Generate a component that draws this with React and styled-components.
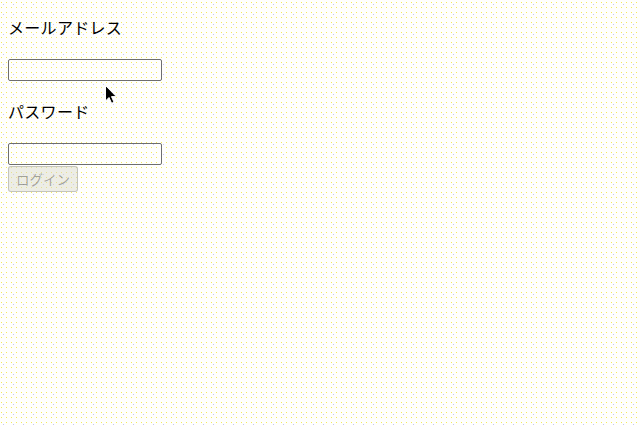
import React from "react";
import styled, { createGlobalStyle } from "styled-components";

const GlobalStyle = createGlobalStyle`
  html, body {
    margin: 0;
    padding: 0;
  }
  body {
    font-family: "Noto Sans CJK JP", "Noto Sans", sans-serif;
    color: #000;
  }
`

const Page = styled.div`
  position: relative;
  min-height: 100vh;
  box-sizing: border-box;
  padding: 16px 8px;
  background-color: #fffffd;
  background-image:
    conic-gradient(at 1px 1px, transparent 75%, #f2ea5c 0),
    conic-gradient(at 1px 1px, transparent 75%, #c9c6f0 0);
  background-size: 5px 5px, 10px 10px;
  background-position: 1px 2px, 3px 4px;
`

const Form = styled.form`
  display: flex;
  flex-direction: column;
  align-items: flex-start;
`

const Field = styled.div`
  display: flex;
  flex-direction: column;
  align-items: flex-start;
  gap: 20px;
  & + & {
    margin-top: 19px;
  }
`

const Label = styled.label`
  display: block;
  font-size: 16px;
  line-height: 23px;
  letter-spacing: 0.3px;
`

const Input = styled.input`
  box-sizing: border-box;
  width: 154px;
  height: 22px;
  margin: 0;
  padding: 1px 2px;
  border: 1px solid #6e6e6e;
  border-radius: 2px;
  background: transparent;
  font-size: 13px;
`

const Button = styled.button`
  box-sizing: border-box;
  margin-top: 1px;
  width: 70px;
  height: 26px;
  padding: 1px 6px;
  border: 1px solid rgba(118, 118, 118, 0.35);
  border-radius: 3px;
  background: rgba(215, 215, 200, 0.45);
  color: rgba(16, 16, 16, 0.35);
  font-family: "Noto Sans CJK JP", sans-serif;
  font-size: 13.5px;
  line-height: 19px;
`

const Cursor = styled.svg`
  position: absolute;
  left: 104px;
  top: 84px;
  width: 14px;
  height: 21px;
`

export default function App() {
  return (
    <Page>
      <GlobalStyle />
      <Form onSubmit={(e) => e.preventDefault()}>
        <Field>
          <Label htmlFor="email">メールアドレス</Label>
          <Input id="email" type="email" />
        </Field>
        <Field>
          <Label htmlFor="password">パスワード</Label>
          <Input id="password" type="password" />
        </Field>
        <Button type="submit" disabled>ログイン</Button>
      </Form>
      <Cursor viewBox="0 0 14 21">
        <path
          d="M1.5 1.5 L1.5 17 L5 13.5 L7.6 19.3 L10 18.2 L7.5 12.6 L12.3 12.6 Z"
          fill="#000"
          stroke="#fff"
          strokeWidth="1"
          strokeLinejoin="round"
        />
      </Cursor>
    </Page>
  );
}
